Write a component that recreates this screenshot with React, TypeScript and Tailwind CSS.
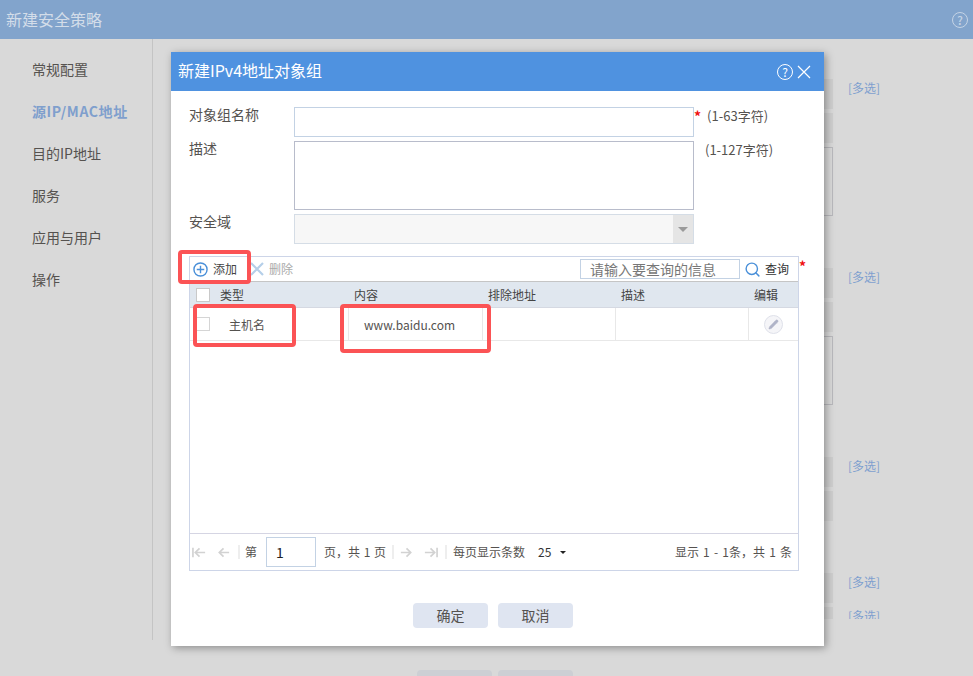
import { Search, Pencil } from "lucide-react";

const font = { fontFamily: '"Noto Sans CJK SC", "Liberation Sans", sans-serif' };

const navItems = ["常规配置", "源IP/MAC地址", "目的IP地址", "服务", "应用与用户", "操作"];

// gray form rows that sit behind the dialog
function BgGroup({ box, second }: { box?: boolean; second?: boolean }) {
  return (
    <div className="mt-[52px] flex items-start first:mt-[40px]">
      <div className="flex w-[173px] flex-col gap-1">
        <div className="h-[30px] bg-[#cfcfcf]" />
        <div className="h-[30px] bg-[#cfcfcf]" />
        {box && <div className="h-[69px] border border-[#b9b9bd]" />}
      </div>
      <div className="ml-[15px] flex flex-col gap-[16px] text-xs leading-[18px] text-[#7e9fcf]">
        <span>[多选]</span>
        {second && <span>[多选]</span>}
      </div>
    </div>
  );
}

function Arrow({ dir, bar }: { dir: "left" | "right"; bar?: boolean }) {
  const d = dir === "left" ? "M14 8H4M8 3.5 3.5 8 8 12.5" : "M2 8h10M8 3.5 12.5 8 8 12.5";
  return (
    <svg width="15" height="15" viewBox="0 0 16 16" fill="none" stroke="#d2d2d2" strokeWidth="1.8">
      <path d={d} />
      {bar && <path d={dir === "left" ? "M1 3v10" : "M15 3v10"} />}
    </svg>
  );
}

const Sep = () => <div className="h-[14px] w-[2px] bg-[#eeeeee]" />;

export default function App() {
  return (
    <div className="relative h-[676px] w-[973px] overflow-hidden bg-[#d9d9d9]" style={font}>
      {/* page header */}
      <div className="flex h-[39px] items-center justify-between bg-[#82a4cc] pl-[6px] pr-[5px]">
        <span className="pb-[2px] text-base text-[#d3dde9]">新建安全策略</span>
        <span className="flex h-[16px] w-[16px] items-center justify-center rounded-full border-[1.5px] border-[#c5d4e6] text-[12px] font-medium leading-none text-[#c5d4e6]">?</span>
      </div>

      <div className="flex h-[601px]">
        <div className="w-[153px] border-r border-[#c4c4c4] pl-[32px] pt-[9px]">
          {navItems.map((n, i) => (
            <div key={n} className={`flex h-[42px] items-center text-sm ${i === 1 ? "font-bold tracking-[0.6px] text-[#7f9fcd]" : "text-[#55524f]"}`}>{n}</div>
          ))}
        </div>
        <div className="h-[580px] flex-1 overflow-hidden pl-[507px]">
          <BgGroup box />
          <BgGroup box />
          <BgGroup />
          <BgGroup second />
        </div>
      </div>

      <div className="mt-[30px] flex gap-[6px] pl-[417px]">
        <div className="h-[30px] w-[75px] rounded-sm bg-[#cdcfd4]" />
        <div className="h-[30px] w-[75px] rounded-sm bg-[#cdcfd4]" />
      </div>

      {/* dialog */}
      <div className="absolute left-[171px] top-[52px] flex h-[594px] w-[653px] flex-col bg-white shadow-[2px_2px_8px_rgba(0,0,0,0.35)]">
        <div className="flex h-[39px] shrink-0 items-center justify-between bg-[#4f92e0] pl-[7px] pr-[13px]">
          <span className="pb-[3px] text-base text-white">新建IPv4地址对象组</span>
          <div className="flex items-center gap-[4px]">
            <span className="flex h-[16px] w-[16px] items-center justify-center rounded-full border-[1.5px] border-white text-[12px] leading-none text-white">?</span>
            <svg width="14" height="14" viewBox="0 0 14 14" fill="none" stroke="white" strokeWidth="1.2"><path d="M1 1l12 12M13 1 1 13" /></svg>
          </div>
        </div>

        <div className="relative px-[18px] pt-[16px] text-[13px] text-[#55524f]">
          <div className="flex h-[30px]">
            <span className="w-[105px] text-sm leading-[14px]">对象组名称</span>
            <div className="h-[30px] w-[400px] border border-[#c3d2e4]" />
            <span className="text-sm font-bold leading-[18px] text-[#f01010]">*</span>
            <span className="ml-[6px] leading-[18px]">(1-63字符)</span>
          </div>
          <div className="mt-[4px] flex h-[69px]">
            <span className="w-[105px] text-sm leading-[14px]">描述</span>
            <div className="h-[69px] w-[400px] border border-[#b8bccb]" />
            <span className="ml-[11px] leading-[18px]">(1-127字符)</span>
          </div>
          <div className="mt-[4px] flex h-[30px]">
            <span className="w-[105px] text-sm leading-[14px]">安全域</span>
            <div className="flex h-[30px] w-[400px] border border-[#d5dde6] bg-[#f7f7f7]">
              <div className="flex-1" />
              <div className="flex w-[20px] items-center justify-center bg-[#e5e5e5]">
                <div className="h-0 w-0 border-x-[5px] border-t-[5px] border-x-transparent border-t-[#9a9a9a]" />
              </div>
            </div>
          </div>

          {/* table panel */}
          <div className="mt-[12px] flex h-[315px] w-[610px] flex-col border border-[#cdd5e8]">
            <div className="flex h-[24px] shrink-0 items-center pl-[3px] pr-[9px]">
              <svg width="15" height="15" viewBox="0 0 16 16" fill="none" stroke="#4a90d9" strokeWidth="1.5"><circle cx="8" cy="8" r="7" /><path d="M8 4v8M4 8h8" /></svg>
              <span className="ml-[5px] text-xs text-[#444]">添加</span>
              <svg width="14" height="14" viewBox="0 0 14 14" fill="none" stroke="#b5cfe9" strokeWidth="2.2" className="ml-[13px]"><path d="M1 1l12 12M13 1 1 13" /></svg>
              <span className="ml-[5px] text-xs text-[#aaa]">删除</span>
              <div className="ml-auto flex h-[20px] w-[160px] items-center border border-[#c3d2e4] pl-[9px] text-sm text-[#777]">请输入要查询的信息</div>
              <Search size={17} strokeWidth={2} className="ml-[4px] text-[#4a90d9]" />
              <span className="ml-[4px] text-xs text-[#333]">查询</span>
            </div>

            <div className="grid h-[27px] shrink-0 grid-cols-[158px_134px_133px_133px_1fr] items-center border-y border-t-[#c5c5c5] border-b-[#d5d9e2] bg-[#e0e7ef] text-xs text-[#444]">
              <div className="flex items-center pl-[6px]">
                <div className="h-[14px] w-[14px] border border-[#c9c9c9] bg-white" />
                <span className="ml-[10px]">类型</span>
              </div>
              <span className="pl-[6px]">内容</span>
              <span className="pl-[6px]">排除地址</span>
              <span className="pl-[6px]">描述</span>
              <span className="pl-[6px]">编辑</span>
            </div>

            <div className="grid h-[33px] shrink-0 grid-cols-[158px_134px_133px_133px_1fr] border-b border-[#e8e8e8] text-xs text-[#55524f]">
              <div className="flex items-center pl-[6px]">
                <div className="h-[14px] w-[14px] border border-[#d5d5d5] bg-white" />
                <span className="ml-[19px] pt-[2px]">主机名</span>
              </div>
              <div className="flex items-center border-l border-[#e8e8e8] pl-[15px] pt-[2px]">www.baidu.com</div>
              <div className="border-l border-[#e8e8e8]" />
              <div className="border-l border-[#e8e8e8]" />
              <div className="flex items-center justify-center border-l border-[#e8e8e8]">
                <div className="flex h-[19px] w-[19px] items-center justify-center rounded-full border border-[#dfe1ea] bg-[#f5f5f8]">
                  <Pencil size={11} fill="#b0b4c8" strokeWidth={1} className="text-[#b0b4c8]" />
                </div>
              </div>
            </div>

            <div className="flex-1" />

            <div className="flex h-[37px] shrink-0 items-center border-t border-[#d5d5e3] pl-[2px] pr-[6px] text-xs text-[#55524f]">
              <Arrow dir="left" bar />
              <div className="ml-[9px]"><Arrow dir="left" /></div>
              <div className="ml-[7px]"><Sep /></div>
              <span className="ml-[5px]">第</span>
              <div className="ml-[9px] flex h-[30px] w-[50px] items-center border border-[#c3d2e4] pl-[9px] text-sm text-[#222]">1</div>
              <span className="ml-[8px] whitespace-pre [word-spacing:1px]">页，共 1 页</span>
              <div className="ml-[6px]"><Sep /></div>
              <div className="ml-[5px]"><Arrow dir="right" /></div>
              <div className="ml-[9px]"><Arrow dir="right" bar /></div>
              <div className="ml-[7px]"><Sep /></div>
              <span className="ml-[6px]">每页显示条数</span>
              <span className="ml-[13px] text-[#333]">25</span>
              <div className="ml-[9px] h-0 w-0 border-x-[3px] border-t-[3px] border-x-transparent border-t-[#222]" />
              <span className="ml-auto whitespace-pre [word-spacing:1.5px]">显示 1 - 1条，共 1 条</span>
            </div>
          </div>
          <span className="absolute left-[628px] top-[168px] text-sm font-bold leading-none text-[#f01010]">*</span>
        </div>

        <div className="mt-[32px] flex gap-[10px] pl-[242px]">
          <button className="h-[25px] w-[75px] rounded-sm bg-[#dfe5f1] pb-[2px] text-sm text-[#55524f]">确定</button>
          <button className="h-[25px] w-[75px] rounded-sm bg-[#dfe5f1] pb-[2px] text-sm text-[#55524f]">取消</button>
        </div>
      </div>

      {/* red annotation boxes */}
      <div className="absolute left-[178px] top-[250px] h-[34px] w-[73px] rounded-sm border-4 border-[#fb5355]" />
      <div className="absolute left-[193px] top-[304px] h-[43px] w-[103px] rounded-sm border-4 border-[#fb5355]" />
      <div className="absolute left-[340px] top-[304px] h-[49px] w-[151px] rounded-sm border-4 border-[#fb5355]" />
    </div>
  );
}
